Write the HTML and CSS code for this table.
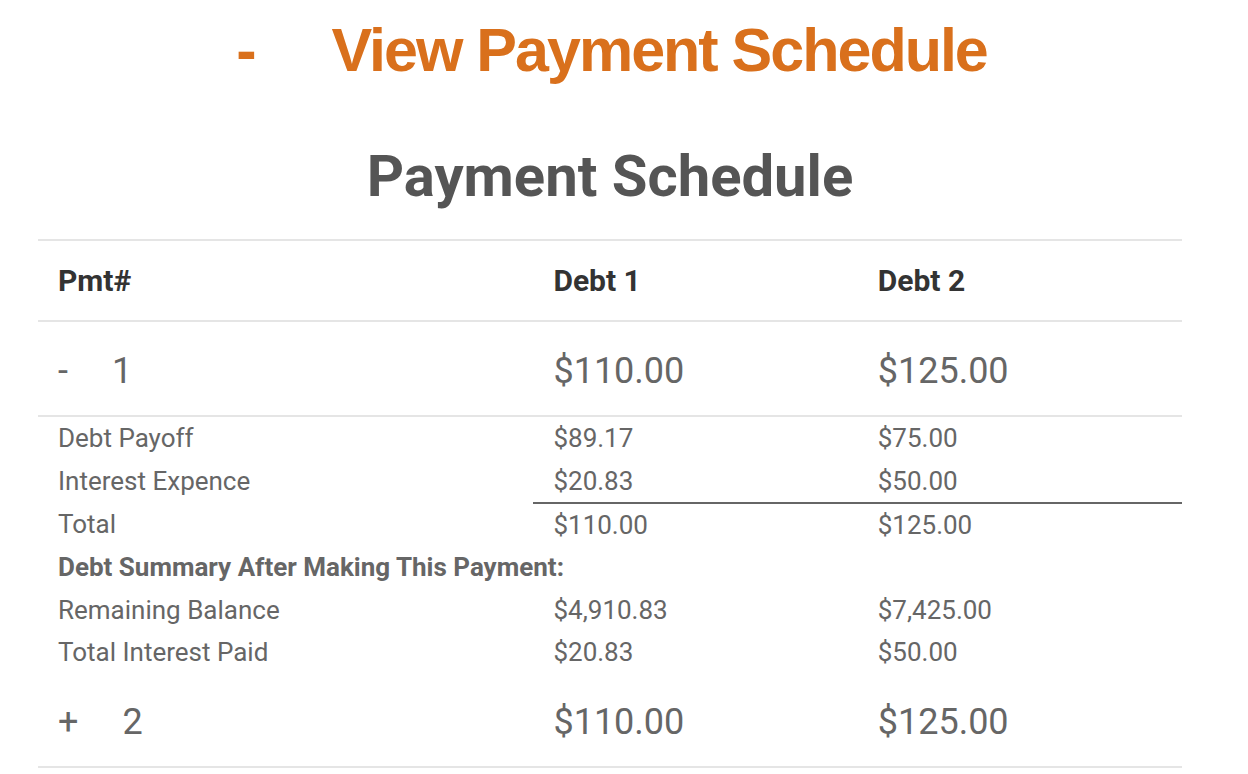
FILE: index.html
```html
<!DOCTYPE html>
<html>
<head>
<meta charset="utf-8">
<link rel="stylesheet" href="styles.css">
</head>
<body>
<div class="page">
  <h1 class="toggle-title"><span class="toggle-sign">-</span>View Payment Schedule</h1>
  <h2 class="schedule-title">Payment Schedule</h2>
  <table class="schedule">
    <colgroup>
      <col class="col-pmt">
      <col class="col-debt">
      <col class="col-debt">
    </colgroup>
    <thead>
      <tr class="head-row">
        <th>Pmt#</th>
        <th>Debt 1</th>
        <th>Debt 2</th>
      </tr>
    </thead>
    <tbody>
      <tr class="pmt-row">
        <td><span class="row-sign minus">-</span>1</td>
        <td>$110.00</td>
        <td>$125.00</td>
      </tr>
      <tr class="detail-row first">
        <td>Debt Payoff</td>
        <td>$89.17</td>
        <td>$75.00</td>
      </tr>
      <tr class="detail-row sum-line">
        <td>Interest Expence</td>
        <td>$20.83</td>
        <td>$50.00</td>
      </tr>
      <tr class="detail-row">
        <td>Total</td>
        <td>$110.00</td>
        <td>$125.00</td>
      </tr>
      <tr class="detail-row">
        <td colspan="3" class="summary-label">Debt Summary After Making This Payment:</td>
      </tr>
      <tr class="detail-row">
        <td>Remaining Balance</td>
        <td>$4,910.83</td>
        <td>$7,425.00</td>
      </tr>
      <tr class="detail-row last">
        <td>Total Interest Paid</td>
        <td>$20.83</td>
        <td>$50.00</td>
      </tr>
      <tr class="pmt-row">
        <td><span class="row-sign plus">+</span>2</td>
        <td>$110.00</td>
        <td>$125.00</td>
      </tr>
    </tbody>
  </table>
</div>
</body>
</html>
```
FILE: styles.css
```css
html, body {
  margin: 0;
  padding: 0;
  background: #ffffff;
}
body {
  font-family: Roboto, "Liberation Sans", Arial, sans-serif;
}
.page {
  width: 1144px;
  margin-left: 38px;
}
.toggle-title {
  margin: 0;
  padding-top: 14px;
  height: 76px;
  text-align: center;
  color: #d9701c;
  font-size: 61px;
  font-weight: 700;
  line-height: 72px;
  font-family: "Liberation Sans", Arial, sans-serif;
  letter-spacing: -2px;
}
.toggle-sign {
  display: inline-block;
  margin-right: 78px;
  letter-spacing: 0;
  transform: translateX(3px);
}
.schedule-title {
  margin: 0;
  padding-top: 49px;
  height: 100px;
  text-align: center;
  color: #555555;
  font-size: 58px;
  font-weight: 700;
  line-height: 74px;
}
.schedule {
  width: 1144px;
  border-collapse: collapse;
  table-layout: fixed;
}
.col-pmt { width: 495px; }
.col-debt { width: 324px; }
.schedule th,
.schedule td {
  padding: 0 0 0 20px;
  text-align: left;
  vertical-align: middle;
}
.head-row th {
  height: 79px;
  border-top: 2px solid #e5e5e5;
  border-bottom: 2px solid #e5e5e5;
  color: #333333;
  font-size: 30px;
  font-weight: 700;
}
.pmt-row td {
  height: 89px;
  padding-top: 4px;
  border-bottom: 2px solid #e5e5e5;
  color: #666666;
  font-size: 36px;
  font-weight: 400;
}
.row-sign {
  display: inline-block;
}
.row-sign.minus { margin-right: 44px; }
.row-sign.plus { margin-right: 44px; }
.detail-row td {
  height: 42.4px;
  color: #666666;
  font-size: 26px;
  line-height: 28px;
}
.sum-line td + td {
  border-bottom: 2px solid #666666;
}
.summary-label {
  font-weight: 700;
  font-size: 25px;
}
```
